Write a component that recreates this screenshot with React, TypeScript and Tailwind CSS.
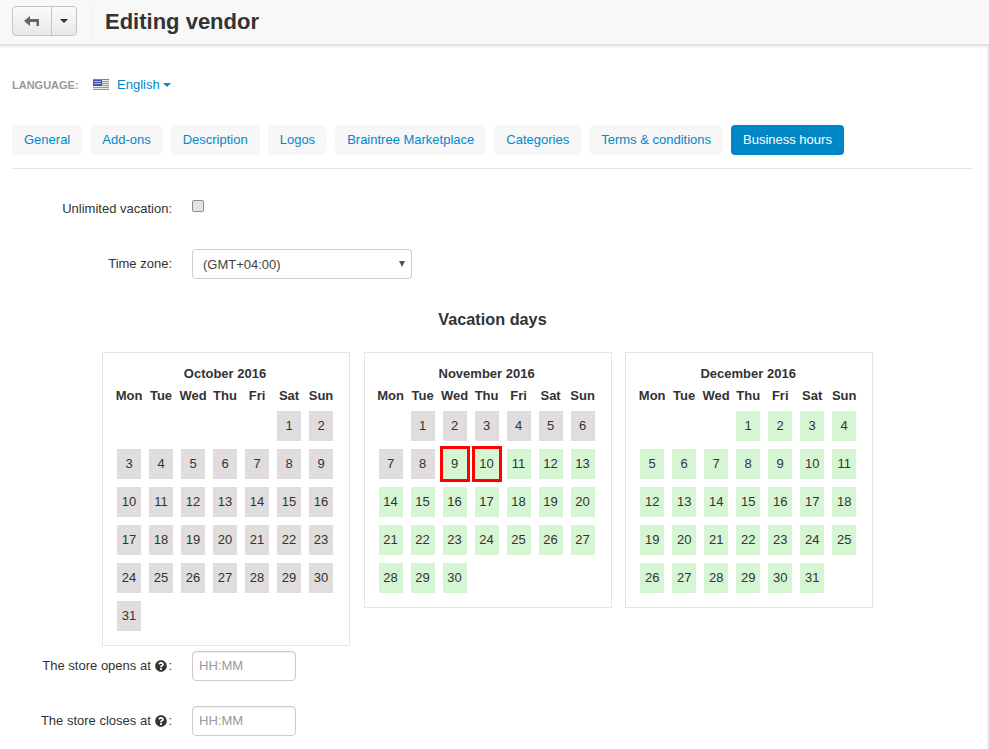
import { FaQuestionCircle } from 'react-icons/fa'

const weekdays = ['Mon', 'Tue', 'Wed', 'Thu', 'Fri', 'Sat', 'Sun']
const tabs = ['General', 'Add-ons', 'Description', 'Logos', 'Braintree Marketplace', 'Categories', 'Terms & conditions']

const months = [
  { title: 'October 2016', offset: 5, days: 31, firstFree: 32 },
  { title: 'November 2016', offset: 1, days: 30, firstFree: 9 },
  { title: 'December 2016', offset: 3, days: 31, firstFree: 1 },
]

const Calendar = ({ title, offset, days, firstFree, selected }: any) => {
  const cells = Array.from({ length: days }, (_, i) => i + 1)

  return (
    <div className="w-[248px] border border-[#e5e5e5] pt-[12px] pl-[10px] pr-[12px] pb-[6px]">
      <div className="text-center text-[13px] leading-[18px] font-bold">{title}</div>
      <div className="grid grid-cols-[repeat(7,32px)] mt-[3px] mb-[5px]">
        {weekdays.map((d) => (
          <div key={d} className="text-center text-[13px] leading-[20px] font-bold">{d}</div>
        ))}
      </div>
      <div className="grid grid-cols-[repeat(7,32px)] auto-rows-[38px]">
        {Array.from({ length: offset }, (_, i) => <div key={i} />)}
        {cells.map((n) => (
          <div key={n}>
            <div className={`mx-auto w-[24px] h-[30px] flex items-center justify-center text-[13px] ${n < firstFree ? 'bg-[#dfdddd]' : 'bg-[#d6f5d3]'} ${selected.includes(n) ? 'ring-[3px] ring-[#ff0000]' : ''}`}>
              {n}
            </div>
          </div>
        ))}
      </div>
    </div>
  )
}

const Flag = () => (
  <svg width="16" height="11" viewBox="0 0 16 11" className="block mb-[1px]">
    <rect width="16" height="11" fill="#ececec" />
    <rect y="0" width="16" height="1" fill="#8a7f86" />
    <rect y="2" width="16" height="1" fill="#cf7f7f" />
    <rect y="4" width="16" height="1" fill="#cf7f7f" />
    <rect y="6" width="16" height="1" fill="#cf7f7f" />
    <rect y="8" width="16" height="1" fill="#cf7f7f" />
    <rect y="10" width="16" height="1" fill="#a9878a" />
    <rect y="1" width="9" height="6" fill="#4455a8" />
    <rect x="1" y="2" width="7" height="1" fill="#aab4e0" />
    <rect x="1" y="4" width="7" height="1" fill="#aab4e0" />
  </svg>
)

const App = () => {
  return (
    <div className="h-[749px] overflow-hidden bg-white text-[#333] text-[13px] font-['Liberation_Sans',Arial,sans-serif]">
      <div className="h-[46px] bg-[#f8f8f8] border-b-2 border-[#e2e2e2] shadow-[0_1px_2px_rgba(0,0,0,0.08)] flex items-center pl-[12px]">
        <div className="flex h-[30px] w-[65px] rounded-[4px] border border-[#c4c4c4] bg-gradient-to-b from-[#fbfbfb] to-[#e8e8e8] mb-[2px]">
          <div className="w-[39px] flex items-center justify-center border-r border-[#c4c4c4]">
            <svg width="15" height="11" viewBox="0 0 15 11" fill="#666" className="mr-[1px]">
              <path d="M6 0 L6 3 L15 3 L15 10 L12.5 10 L12.5 6 L6 6 L6 10 L0 5 Z" />
            </svg>
          </div>
          <div className="flex-1 flex items-center justify-center">
            <div className="w-0 h-0 border-x-[4px] border-x-transparent border-t-[4px] border-t-[#333]" />
          </div>
        </div>
        <div className="w-px h-[30px] bg-[#eeeeee] ml-[14px] mb-[2px]" />
        <h1 className="ml-[13px] text-[22px] leading-[30px] font-bold">Editing vendor</h1>
      </div>

      <div className="h-full pt-[29px] pl-[12px] pr-[14px] border-r-2 border-[#efefef]">
        <div className="flex items-center h-[20px]">
          <span className="w-[81px] text-[11px] font-bold text-[#999]">LANGUAGE:</span>
          <Flag />
          <span className="ml-[8px] text-[#0088cc]">English</span>
          <div className="ml-[3px] w-0 h-0 border-x-[4px] border-x-transparent border-t-[4px] border-t-[#0088cc]" />
        </div>

        <div className="flex gap-[8px] mt-[30px] pb-[13px] border-b border-[#e3e3e3]">
          {tabs.map((t) => (
            <div key={t} className="h-[30px] px-[12px] flex items-center rounded-[5px] bg-[#f7f7f7] text-[#0088cc]">{t}</div>
          ))}
          <div className="h-[30px] px-[12px] flex items-center rounded-[4px] bg-[#0088c6] text-white">Business hours</div>
        </div>

        <div className="flex items-start mt-[31px]">
          <label className="w-[160px] text-right leading-[18px]">Unlimited vacation:</label>
          <div className="ml-[20px] w-[12px] h-[12px] rounded-[2px] border border-[#8f8f8f] bg-[#e4e4e4]" />
        </div>

        <div className="flex items-start mt-[31px]">
          <label className="w-[160px] text-right leading-[30px]">Time zone:</label>
          <div className="ml-[20px] w-[220px] h-[30px] rounded-[4px] border border-[#cccccc] bg-white flex items-center justify-between pl-[10px] pr-[6px]">
            <span className="pt-[1px] text-[#444]">(GMT+04:00)</span>
            <div className="w-0 h-0 border-x-[3px] border-x-transparent border-t-[6px] border-t-[#555]" />
          </div>
        </div>

        <h2 className="mt-[30px] text-center text-[16.25px] leading-[20px] font-bold">Vacation days</h2>

        <div className="flex gap-[13.6px] ml-[90px] mt-[23px] items-start">
          {months.map((m, i) => (
            <Calendar key={m.title} {...m} selected={i === 1 ? [9, 10] : []} />
          ))}
        </div>

        <div className="flex items-center mt-[5px]">
          <label className="w-[160px] flex items-center justify-end">
            The store opens at&nbsp;<FaQuestionCircle className="text-[#333] w-[12px] h-[12px] mx-[1px]" />:
          </label>
          <div className="ml-[20px] w-[104px] h-[30px] rounded-[4px] border border-[#cccccc] shadow-[inset_0_1px_1px_rgba(0,0,0,0.075)] flex items-center pl-[6px] text-[#999]">HH:MM</div>
        </div>

        <div className="flex items-center mt-[25px]">
          <label className="w-[160px] flex items-center justify-end">
            The store closes at&nbsp;<FaQuestionCircle className="text-[#333] w-[12px] h-[12px] mx-[1px]" />:
          </label>
          <div className="ml-[20px] w-[104px] h-[30px] rounded-[4px] border border-[#cccccc] shadow-[inset_0_1px_1px_rgba(0,0,0,0.075)] flex items-center pl-[6px] text-[#999]">HH:MM</div>
        </div>
      </div>
    </div>
  )
}

export default App
